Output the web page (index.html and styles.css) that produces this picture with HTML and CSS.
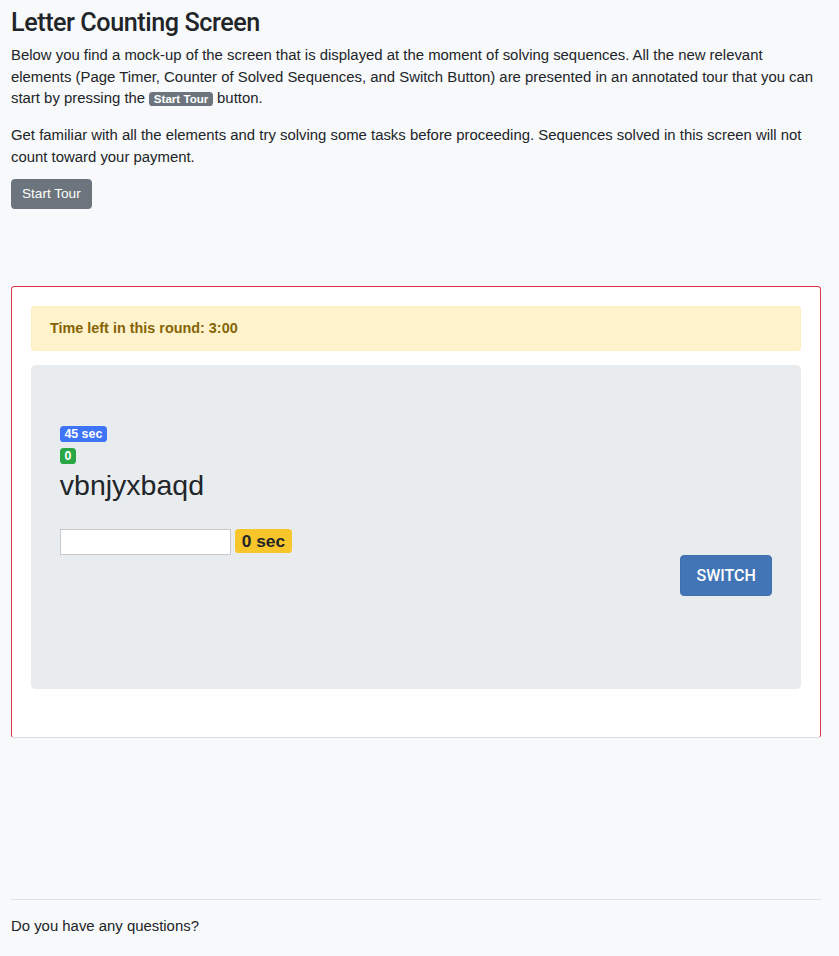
FILE: index.html
```html
<!DOCTYPE html>
<html lang="en">
<head>
<meta charset="utf-8">
<title>Letter Counting Screen</title>
<link rel="stylesheet" href="styles.css">
</head>
<body>
<div class="container">
  <h3 class="title">Letter Counting Screen</h3>
  <p class="intro">Below you find a mock-up of the screen that is displayed at the moment of solving sequences. All the new relevant elements (Page Timer, Counter of Solved Sequences, and Switch Button) are presented in an annotated tour that you can start by pressing the <span class="badge badge-secondary">Start Tour</span> button.</p>
  <p class="note">Get familiar with all the elements and try solving some tasks before proceeding. Sequences solved in this screen will not count toward your payment.</p>
  <button class="btn btn-secondary" type="button">Start Tour</button>

  <div class="card">
    <div class="alert">Time left in this round: 3:00</div>
    <div class="jumbotron">
      <div class="badge-line"><span class="badge badge-primary">45 sec</span></div>
      <div class="badge-line"><span class="badge badge-success">0</span></div>
      <h2 class="sequence">vbnjyxbaqd</h2>
      <div class="answer-row">
        <input class="answer" type="text">
        <span class="timer">0 sec</span>
      </div>
      <div class="switch-row">
        <button class="btn-switch" type="button">SWITCH</button>
      </div>
    </div>
  </div>

  <hr class="divider">
  <p class="questions">Do you have any questions?</p>
</div>
</body>
</html>
```

FILE: styles.css
```css
html, body {
  margin: 0;
  padding: 0;
}
body {
  background: #f8f9fa;
  color: #212529;
  font-family: "Liberation Sans", Arial, sans-serif;
  font-size: 14.9px;
  line-height: 21.6px;
}
.container {
  width: 810px;
  margin-left: 11px;
}
.title {
  margin: 8px 0 7px;
  font-family: Roboto, "Liberation Sans", sans-serif;
  font-size: 25.2px;
  line-height: 30px;
  font-weight: 500;
  letter-spacing: -0.45px;
}
p {
  margin: 0 0 14.4px;
}
.intro {
  margin-bottom: 15.4px;
}
.note {
  margin-bottom: 10.4px;
}
.badge {
  display: inline-block;
  font-size: 11.6px;
  font-weight: 700;
  line-height: 1;
  padding: 1.5px 4.6px;
  border-radius: 3.6px;
  color: #fff;
  vertical-align: baseline;
  white-space: nowrap;
}
.badge-secondary { background: #6c757d; }
.badge-primary { background: #3e74f6; font-size: 12.4px; padding: 2px 4.6px; }
.badge-success { background: #2aa745; font-size: 12.4px; padding: 2px 4.6px; }

.btn {
  display: block;
  height: 30px;
  padding: 0 10px;
  border: 1px solid #6c757d;
  border-radius: 3.6px;
  background: #6c757d;
  color: #fff;
  font-family: inherit;
  font-size: 13.6px;
}

.card {
  margin-top: 77px;
  background: #fff;
  border: 1px solid #dc3545;
  border-bottom-color: #dcdde0;
  border-radius: 3.6px;
  padding: 19px 19px;
}
.alert {
  background: #fff3cd;
  border: 1px solid #ffeeba;
  color: #856404;
  border-radius: 3.6px;
  padding: 10.8px 18px;
  font-size: 14.4px;
  font-weight: 700;
  margin-bottom: 14.4px;
}
.jumbotron {
  background: #e9ecef;
  border-radius: 4.3px;
  padding: 57.6px 28.8px;
  margin-bottom: 28.8px;
}
.badge-line {
  height: 21.6px;
}
.sequence {
  margin: 2px 0 7.2px;
  font-size: 28.5px;
  line-height: 34.6px;
  font-weight: 400;
}
.answer-row {
  display: flex;
  align-items: flex-start;
  gap: 4px;
  margin-top: 26.4px;
}
.answer {
  width: 171px;
  height: 26px;
  box-sizing: border-box;
  border: 1px solid #c9c9c9;
  background: #fff;
  margin: 0;
  padding: 0 4px;
}
.timer {
  background: #f8c52b;
  color: #212529;
  font-weight: 700;
  font-size: 17.3px;
  line-height: 24px;
  height: 24px;
  padding: 0 7px;
  border-radius: 3.6px;
}
.switch-row {
  display: flex;
  justify-content: flex-end;
  margin-bottom: 35.4px;
}
.btn-switch {
  width: 92px;
  height: 41px;
  background: #4275b6;
  border: 1px solid #3e6fae;
  border-radius: 4px;
  color: #fff;
  font-family: Roboto, "Liberation Sans", sans-serif;
  font-weight: 500;
  font-size: 16px;
  padding: 0;
}

.divider {
  margin: 161px 0 16.4px;
  border: 0;
  border-top: 1px solid #dfe1e4;
}
.questions {
  margin: 0;
}
```
